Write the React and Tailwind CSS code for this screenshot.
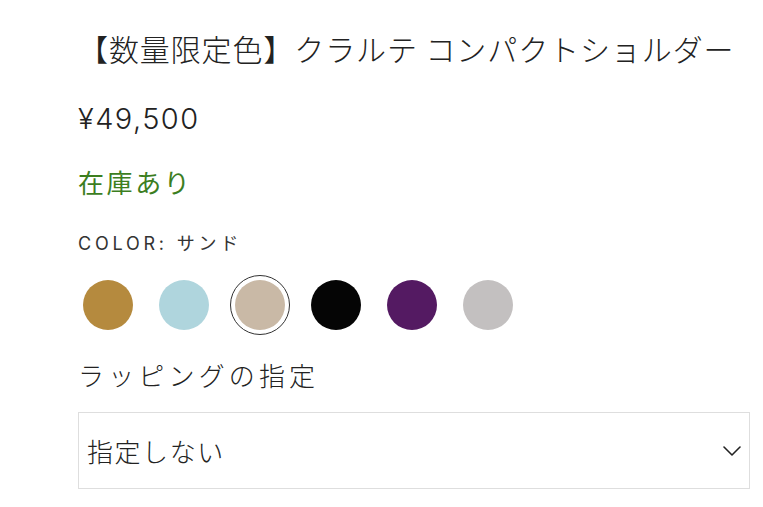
import React, { useState } from "react";

const jp = { fontFamily: "'Noto Sans CJK JP', 'Noto Sans', sans-serif" };

const swatches = [
  { name: "キャメル", color: "bg-[#b58a3e]" },
  { name: "ミスト", color: "bg-[#afd5dd]" },
  { name: "サンド", color: "bg-[#c9b9a6]" },
  { name: "ブラック", color: "bg-[#050505]" },
  { name: "パープル", color: "bg-[#541a62]" },
  { name: "グレー", color: "bg-[#c3c0c0]" },
];

const App = () => {
  const [selected, setSelected] = useState(2);

  return (
    <div className="bg-white min-h-screen w-[763px] h-[507px] overflow-hidden pl-[78px] pt-[26px] text-[#222]">
      <h1
        className="text-[30px] leading-[45px] font-light tracking-[0.03em] whitespace-nowrap"
        style={jp}
      >
        【数量限定色】クラルテ コンパクトショルダー
      </h1>

      <p className="mt-[28px] text-[29px] leading-[40px] font-['Inter'] font-light tracking-[0.05em]">
        ¥49,500
      </p>

      <p
        className="mt-[23px] text-[26px] leading-[39px] font-normal tracking-[0.1em] text-[#3c7e1f]"
        style={jp}
      >
        在庫あり
      </p>

      <p className="mt-[29px] text-[18px] leading-[27px] tracking-[0.21em] text-[#333] font-['Inter','Noto_Sans_CJK_JP',sans-serif]">
        COLOR: {swatches[selected].name}
      </p>

      <div className="mt-[18px] flex gap-[16px]">
        {swatches.map((s, i) => (
          <button
            key={s.name}
            onClick={() => setSelected(i)}
            className={`w-[60px] h-[60px] rounded-full flex items-center justify-center border ${
              i === selected ? "border-[#333]" : "border-transparent"
            }`}
          >
            <span className={`block w-[50px] h-[50px] rounded-full ${s.color}`} />
          </button>
        ))}
      </div>

      <p
        className="mt-[20px] text-[26px] leading-[39px] font-light tracking-[0.16em]"
        style={jp}
      >
        ラッピングの指定
      </p>

      <div className="mt-[18px] w-[672px] h-[77px] border border-[#dedede] flex items-center justify-between pl-[8px] pr-[8px]">
        <span className="text-[26px] leading-[39px] font-light tracking-[0.06em]" style={jp}>
          指定しない
        </span>
        <svg width="18" height="10" viewBox="0 0 18 10" fill="none">
          <polyline
            points="1,1 9,9 17,1"
            stroke="#222"
            strokeWidth="1.6"
            strokeLinecap="round"
            strokeLinejoin="round"
          />
        </svg>
      </div>
    </div>
  );
};

export default App;
